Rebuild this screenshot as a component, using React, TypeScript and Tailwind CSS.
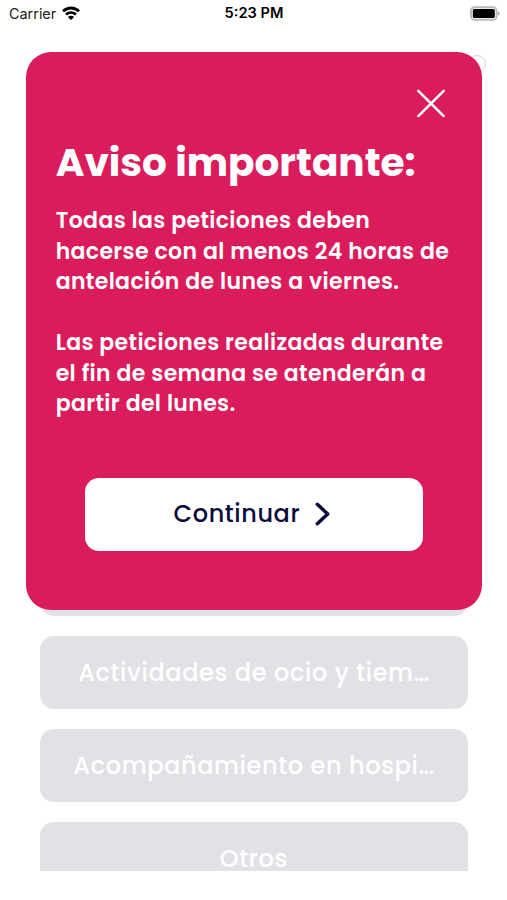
import { useState } from 'react'

const CATEGORIES = [
  'Actividades de ocio y tiem…',
  'Acompañamiento en hospi…',
  'Otros',
]

function StatusBar() {
  return (
    <header className="grid h-7 grid-cols-3 items-center pl-[9px] pr-[7px] font-['Inter',sans-serif] text-[14.4px] text-black">
      <div className="flex items-center gap-[6px] text-[#222]">
        <span>Carrier</span>
        <svg viewBox="0 0 18 14" className="h-[14px] w-[18px] -translate-y-px" fill="none" stroke="#000" strokeWidth="2.8">
          <path d="M1 5.2C5.6.9 12.4.9 17 5.2" />
          <path d="M4 8.5c2.9-2.5 7.1-2.5 10 0" />
          <path d="M9 14 5.9 10.9c1.8-1.5 4.4-1.5 6.2 0z" fill="#000" stroke="none" />
        </svg>
      </div>
      <span className="-ml-px text-center text-[14.6px] font-semibold whitespace-nowrap">5:23 PM</span>
      <svg viewBox="0 0 31 15" className="h-[15px] w-[31px] -translate-y-px justify-self-end">
        <rect x="2" y="1.2" width="25.6" height="12.6" rx="3.6" fill="#fff" stroke="#b9b9b9" strokeWidth="1.9" />
        <rect x="3.8" y="3" width="22" height="9" rx="1.6" fill="#000" />
        <path d="M29 5.4c2 .6 2 3.6 0 4.2z" fill="#a6a6a6" />
      </svg>
    </header>
  )
}

function Notice({ onClose }: { onClose: () => void }) {
  return (
    <div
      role="dialog"
      className="absolute top-[52.3px] left-[26.2px] flex h-[557.4px] w-[455.5px] flex-col rounded-[25px] bg-[#da1c5c] pt-[37.2px] pr-[30px] pl-[29.5px] text-white"
    >
      <button onClick={onClose} aria-label="Cerrar" className="mr-[7.2px] self-end">
        <svg viewBox="0 0 28 28" className="size-7" stroke="currentColor" strokeWidth="2.4" strokeLinecap="round">
          <path d="M1.3 1.8 26.7 27.2M26.7 1.8 1.3 27.2" />
        </svg>
      </button>

      <h1 className="mt-[16.8px] text-[39px] leading-[58px] font-bold whitespace-nowrap">Aviso importante:</h1>

      <div className="mt-[13.9px] text-[22px] leading-[30.6px] font-semibold tracking-[0.35px] whitespace-nowrap">
        <p>
          Todas las peticiones deben
          <br />
          hacerse con al menos 24 horas de
          <br />
          antelación de lunes a viernes.
        </p>
        <p className="mt-[30.2px]">
          Las peticiones realizadas durante
          <br />
          el fin de semana se atenderán a
          <br />
          partir del lunes.
        </p>
      </div>

      <button
        onClick={onClose}
        className="mt-[57.8px] ml-[29px] flex h-[73.4px] w-[338.5px] items-center justify-center gap-[15px] rounded-[14px] bg-white pr-[4px] text-[24px] font-medium tracking-[0.6px] text-[#0d0a3c]"
      >
        Continuar
        <svg viewBox="0 0 15 24" className="h-6 w-[15px]" fill="none" stroke="currentColor" strokeWidth="3.5" strokeLinecap="round" strokeLinejoin="round">
          <path d="M2.3 2.3 12.7 12 2.3 21.7" />
        </svg>
      </button>
    </div>
  )
}

export default function App() {
  const [open, setOpen] = useState(true)

  return (
    <div className="relative h-[900px] w-[507px] overflow-hidden bg-white font-['Poppins','Inter',sans-serif]">
      <StatusBar />

      <div className="mt-[27px] mr-[21px] flex justify-end">
        <div className="size-[18px] rounded-full border-[1.5px] border-[#d6d6d9]" />
      </div>

      {/* Lista de categorías, cortada por el borde inferior */}
      <main className="mt-[470px] flex h-[327.5px] flex-col gap-[19.7px] overflow-hidden pr-[39.3px] pl-10">
        <div className="h-[73.2px] shrink-0 rounded-[14px] bg-[#e2e1e6]" />
        {CATEGORIES.map((name) => (
          <div
            key={name}
            className="flex h-[73.2px] shrink-0 items-center justify-center rounded-[14px] bg-[#e2e1e6] pt-px text-[24px] leading-[22px] font-medium tracking-[0.62px] whitespace-nowrap text-white"
          >
            {name}
          </div>
        ))}
      </main>

      {open && <Notice onClose={() => setOpen(false)} />}
    </div>
  )
}
